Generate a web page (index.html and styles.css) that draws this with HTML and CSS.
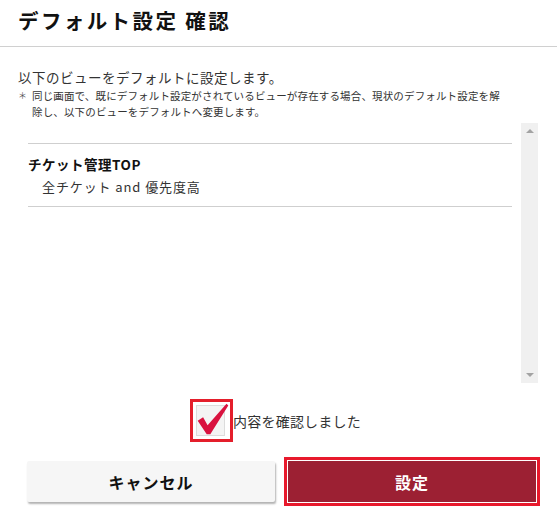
FILE: index.html
```html
<!DOCTYPE html>
<html lang="ja">
<head>
<meta charset="utf-8">
<title>デフォルト設定 確認</title>
<link rel="stylesheet" href="styles.css">
</head>
<body>
<div class="dialog">
  <header class="head">
    <h1 class="title">デフォルト設定 確認</h1>
  </header>
  <div class="content">
    <p class="lead">以下のビューをデフォルトに設定します。</p>
    <p class="note"><span class="mark">＊</span><span>同じ画面で、既にデフォルト設定がされているビューが存在する場合、現状のデフォルト設定を解<br>除し、以下のビューをデフォルトへ変更します。</span></p>
    <div class="listbox">
      <div class="list">
        <div class="item">
          <div class="item-title">チケット管理TOP</div>
          <div class="item-sub">全チケット and 優先度高</div>
        </div>
      </div>
      <div class="scrollbar">
        <span class="arrow up"></span>
        <span class="arrow down"></span>
      </div>
    </div>
    <label class="confirm">
      <span class="focus">
        <span class="box"></span>
        <svg class="check" viewBox="0 0 40 40" width="40" height="40">
          <path d="M3 22 L9 18 L14 27 L35 3 L37 5 L17 37 L13 37 Z" fill="#d9123f"/>
        </svg>
      </span>
      <span class="confirm-text">内容を確認しました</span>
    </label>
    <div class="actions">
      <button class="btn cancel">キャンセル</button>
      <button class="btn submit">設定</button>
    </div>
  </div>
</div>
</body>
</html>
```

FILE: styles.css
```css
html, body {
  margin: 0;
  padding: 0;
  background: #fff;
}
body {
  font-family: "Noto Sans CJK JP", "Noto Sans", sans-serif;
  color: #222;
  width: 557px;
  height: 521px;
  overflow: hidden;
}
.head {
  border-bottom: 1px solid #d0d0d0;
  padding: 0 18px;
  display: flex;
  align-items: center;
  box-sizing: border-box;
  height: 47px;
}
.title {
  margin: 0;
  font-size: 20.5px;
  font-weight: bold;
  color: #111;
  letter-spacing: 2.4px;
  position: relative;
  top: -3px;
}
.content {
  padding: 0 0 0 18px;
}
.lead {
  margin: 20px 0 0 0;
  font-size: 13.5px;
  line-height: 20px;
  color: #333;
  letter-spacing: 0.5px;
}
.note {
  margin: 1px 0 0 0;
  font-size: 10.5px;
  line-height: 16px;
  color: #333;
  display: flex;
  white-space: nowrap;
  letter-spacing: 0.15px;
}
.mark {
  flex: none;
  width: 14px;
  font-size: 9px;
  color: #555;
}
.listbox {
  margin-top: 3px;
  width: 520px;
  height: 260px;
  display: flex;
}
.list {
  flex: 1;
  padding: 20px 9px 0 10px;
}
.item {
  border-top: 1px solid #cfcfcf;
  border-bottom: 1px solid #cfcfcf;
  padding-top: 10px;
  height: 52px;
}
.item-title {
  font-size: 13.5px;
  font-weight: bold;
  color: #111;
  line-height: 20px;
  letter-spacing: 0.5px;
}
.item-sub {
  font-size: 13px;
  color: #333;
  line-height: 20px;
  padding-left: 14px;
  margin-top: 3px;
  letter-spacing: 0.9px;
}
.scrollbar {
  width: 17px;
  flex: none;
  background: #f0f0f0;
  display: flex;
  flex-direction: column;
  justify-content: space-between;
  align-items: center;
  padding: 6px 0 6px;
  box-sizing: border-box;
}
.arrow {
  width: 0;
  height: 0;
  border-left: 4px solid transparent;
  border-right: 4px solid transparent;
}
.arrow.up {
  border-bottom: 4px solid #a3a3a3;
}
.arrow.down {
  border-top: 4px solid #a3a3a3;
}
.confirm {
  display: flex;
  align-items: center;
  justify-content: center;
  margin-top: 16px;
  margin-left: -24px;
  gap: 0;
}
.focus {
  position: relative;
  width: 37px;
  height: 37px;
  border: 3px solid #e41e2b;
  display: block;
}
.box {
  position: absolute;
  left: 3px;
  top: 3px;
  width: 27px;
  height: 29px;
  background: #f4f4f4;
  border: 1px solid #dcdcdc;
}
.check {
  position: absolute;
  left: 2px;
  top: -1px;
  width: 36px;
  height: 36px;
}
.confirm-text {
  font-size: 14px;
  color: #333;
  letter-spacing: 0.2px;
}
.actions {
  display: flex;
  gap: 13px;
  margin-top: 19px;
  padding-left: 9px;
}
.btn {
  width: 248px;
  height: 41px;
  font-family: "Noto Sans CJK JP", "Noto Sans", sans-serif;
  font-size: 16px;
  font-weight: bold;
  border: none;
  padding: 0;
  cursor: pointer;
  letter-spacing: 1px;
}
.cancel {
  background: #f6f6f6;
  color: #111;
  box-shadow: 1px 2px 2px rgba(0, 0, 0, 0.3);
  border-radius: 2px;
}
.submit {
  background: #9c2033;
  color: #fff;
  box-shadow: 0 0 0 1px #fff, 0 0 0 4px #e8192c;
}
```
